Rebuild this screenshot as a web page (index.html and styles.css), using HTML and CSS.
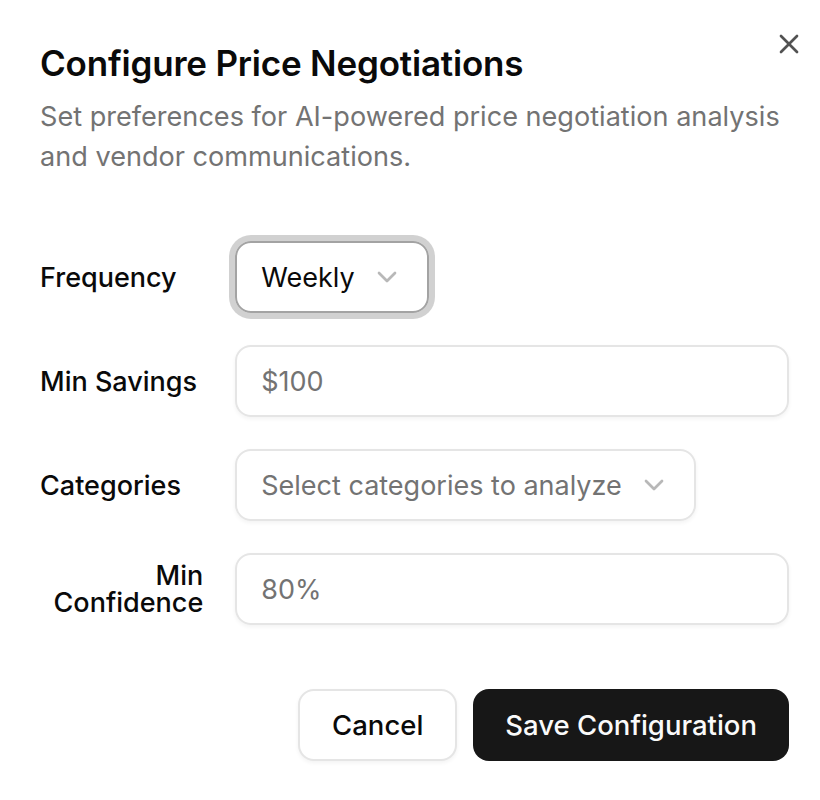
FILE: index.html
```html
<!DOCTYPE html>
<html lang="en">
<head>
    <meta charset="UTF-8">
    <meta name="viewport" content="width=device-width, initial-scale=1.0">
    <title>Configure Price Negotiations</title>
    <link rel="stylesheet" href="styles.css">
</head>
<body>
    <div class="dialog" role="dialog" aria-labelledby="dialog-title">
        <div class="dialog-header">
            <h2 class="dialog-title" id="dialog-title">Configure Price Negotiations</h2>
            <p class="dialog-description">
                Set preferences for AI-powered price negotiation analysis and vendor communications.
            </p>
        </div>

        <div class="form-grid">
            <div class="form-row">
                <label class="label" for="frequency">Frequency</label>
                <button class="select-trigger focused" id="frequency" type="button">
                    <span class="select-value">Weekly</span>
                    <svg class="chevron" viewBox="0 0 24 24" aria-hidden="true"><path d="m6 9 6 6 6-6"/></svg>
                </button>
            </div>
            <div class="form-row">
                <label class="label" for="min-savings">Min Savings</label>
                <input class="input" id="min-savings" type="text" placeholder="$100">
            </div>
            <div class="form-row">
                <label class="label" for="categories">Categories</label>
                <button class="select-trigger" id="categories" type="button">
                    <span class="select-placeholder">Select categories to analyze</span>
                    <svg class="chevron" viewBox="0 0 24 24" aria-hidden="true"><path d="m6 9 6 6 6-6"/></svg>
                </button>
            </div>
            <div class="form-row">
                <label class="label" for="min-confidence">Min Confidence</label>
                <input class="input" id="min-confidence" type="text" placeholder="80%">
            </div>
        </div>

        <div class="dialog-footer">
            <button class="btn btn-outline" type="button">Cancel</button>
            <button class="btn btn-primary" type="button">Save Configuration</button>
        </div>

        <button class="dialog-close" type="button" aria-label="Close">
            <svg viewBox="0 0 24 24" aria-hidden="true"><path d="M18 6 6 18"/><path d="m6 6 12 12"/></svg>
        </button>
    </div>
</body>
</html>
```

FILE: styles.css
```css
:root {
    --foreground: #0a0a0a;
    --muted: #737373;
    --border: #e5e5e5;
    --ring: #a3a3a3;
    --primary: #171717;
}

* {
    box-sizing: border-box;
}

body {
    margin: 0;
    background: #ffffff;
    color: var(--foreground);
    font-family: Inter, "Liberation Sans", sans-serif;
}

.dialog {
    position: relative;
    display: grid;
    gap: 32px;
    padding: 45px 31px 40px 40px;
}

.dialog-header {
    display: flex;
    flex-direction: column;
    gap: 16px;
}

.dialog-title {
    margin: 0;
    font-size: 35px;
    font-weight: 600;
    line-height: 36px;
    letter-spacing: -0.2px;
}

.dialog-description {
    margin: 0;
    font-size: 27.1px;
    line-height: 40px;
    color: var(--muted);
}

.form-grid {
    display: grid;
    gap: 32px;
    padding: 32px 0;
}

.form-row {
    display: grid;
    grid-template-columns: repeat(4, 1fr);
    gap: 32px;
    align-items: center;
}

.label {
    display: flex;
    align-items: center;
    text-align: right;
    font-size: 27px;
    font-weight: 500;
    line-height: 1;
}

.input,
.select-trigger {
    grid-column: span 3;
    height: 72px;
    border: 2px solid var(--border);
    border-radius: 16px;
    background: transparent;
    box-shadow: 0 2px 4px rgba(0, 0, 0, 0.05);
    font-family: inherit;
    font-size: 27px;
    color: var(--foreground);
}

.input {
    width: 100%;
    padding: 0 24px;
    outline: none;
}

.input::placeholder,
.select-placeholder {
    color: var(--muted);
}

.select-trigger {
    justify-self: start;
    display: flex;
    align-items: center;
    gap: 16px;
    padding: 0 24px;
    cursor: pointer;
}

.select-trigger.focused {
    border-color: var(--ring);
    box-shadow: 0 0 0 6px rgba(163, 163, 163, 0.5);
}

.chevron {
    width: 32px;
    height: 32px;
    fill: none;
    stroke: var(--muted);
    stroke-width: 2;
    stroke-linecap: round;
    stroke-linejoin: round;
    opacity: 0.5;
}

.dialog-footer {
    display: flex;
    justify-content: flex-end;
    gap: 16px;
}

.btn {
    height: 72px;
    padding: 0 32px;
    border-radius: 16px;
    font-family: inherit;
    font-size: 27.5px;
    font-weight: 500;
    cursor: pointer;
}

.btn-outline {
    background: #ffffff;
    color: var(--foreground);
    border: 2px solid var(--border);
    box-shadow: 0 2px 4px rgba(0, 0, 0, 0.05);
}

.btn-primary {
    background: var(--primary);
    color: #fafafa;
    border: none;
}

.dialog-close {
    position: absolute;
    top: 28px;
    right: 15px;
    width: 32px;
    height: 32px;
    padding: 0;
    border: none;
    background: none;
    opacity: 0.7;
    cursor: pointer;
}

.dialog-close svg {
    width: 32px;
    height: 32px;
    fill: none;
    stroke: var(--foreground);
    stroke-width: 2;
    stroke-linecap: round;
    stroke-linejoin: round;
}
```
